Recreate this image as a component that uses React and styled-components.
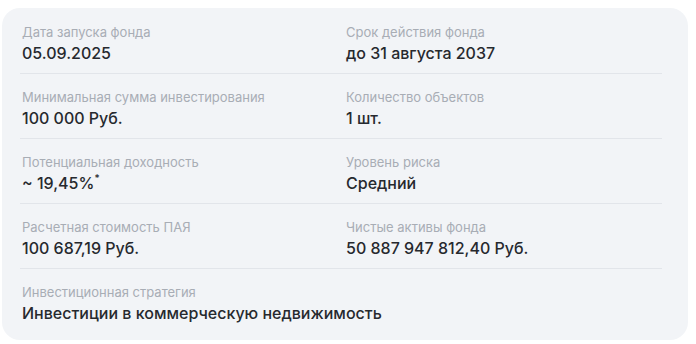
import React from 'react';
import styled, { createGlobalStyle } from 'styled-components';

const Global = createGlobalStyle`
  body {
    margin: 0;
    background: #ffffff;
    font-family: Inter, "Noto Sans", sans-serif;
  }
`;

const Page = styled.div`
  padding: 8px 8px 4px 2px;
`;

const Card = styled.div`
  background: #f2f4f7;
  border-radius: 18px;
  padding: 16px 26px 14px 18px;
  height: 332px;
  box-sizing: border-box;
`;

const Row = styled.div`
  display: grid;
  grid-template-columns: 324px 1fr;
  padding: ${p => (p.first ? '0' : '15px')} 0 10px 2px;
  border-bottom: ${p => (p.last ? 'none' : '1px solid #e2e5ea')};
`;

const Cell = styled.div`
  display: flex;
  flex-direction: column;
  gap: 3px;
  grid-column: ${p => (p.wide ? '1 / -1' : 'auto')};
`;

const Label = styled.div`
  font-size: 13px;
  line-height: 16px;
  color: #a8adb5;
`;

const Value = styled.div`
  font-size: 16px;
  line-height: 20px;
  font-weight: 500;
  color: #26292e;
`;

const Sup = styled.sup`
  font-size: 10px;
  line-height: 0;
  position: relative;
  top: -1px;
`;

const rows = [
  [
    ['Дата запуска фонда', '05.09.2025'],
    ['Срок действия фонда', 'до 31 августа 2037'],
  ],
  [
    ['Минимальная сумма инвестирования', '100 000 Руб.'],
    ['Количество объектов', '1 шт.'],
  ],
  [
    ['Потенциальная доходность', '~ 19,45%', true],
    ['Уровень риска', 'Средний'],
  ],
  [
    ['Расчетная стоимость ПАЯ', '100 687,19 Руб.'],
    ['Чистые активы фонда', '50 887 947 812,40 Руб.'],
  ],
  [['Инвестиционная стратегия', 'Инвестиции в коммерческую недвижимость']],
];

export default function App() {
  return (
    <>
      <Global />
      <Page>
        <Card>
          {rows.map((r, i) => (
            <Row key={i} first={i === 0} last={i === rows.length - 1}>
              {r.map(([label, value, star]) => (
                <Cell key={label} wide={r.length === 1}>
                  <Label>{label}</Label>
                  <Value>
                    {value}
                    {star && <Sup>*</Sup>}
                  </Value>
                </Cell>
              ))}
            </Row>
          ))}
        </Card>
      </Page>
    </>
  );
}
